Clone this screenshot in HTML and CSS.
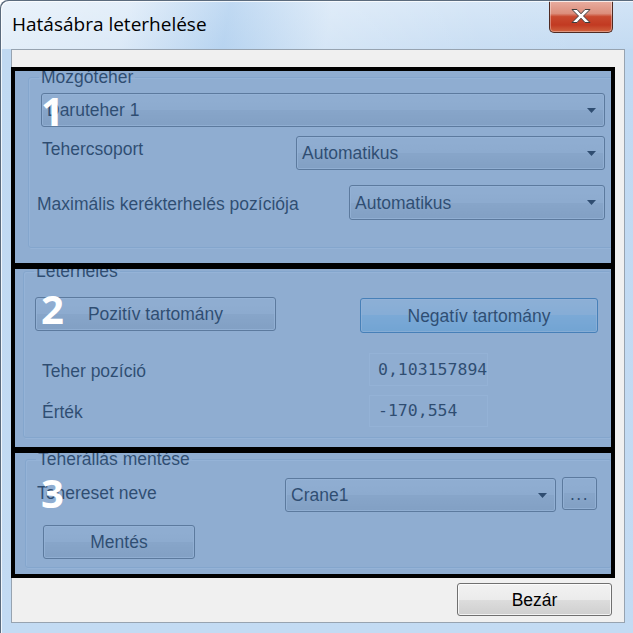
FILE: index.html
```html
<!DOCTYPE html>
<html lang="hu">
<head>
<meta charset="utf-8">
<title>Hatásábra leterhelése</title>
<link rel="stylesheet" href="styles.css">
</head>
<body>
<div class="window">
  <div class="titlebar">
    <div class="title">Hatásábra leterhelése</div>
    <div class="close">
      <svg width="22" height="16" viewBox="0 0 22 16"><path d="M2 1.5h5l4 4.3 4-4.3h5l-6.5 6.5 6.5 6.5h-5l-4-4.3-4 4.3h-5l6.5-6.5z" fill="#fff" stroke="#3d3d3d" stroke-width="1" stroke-linejoin="round"/></svg>
    </div>
  </div>
  <div class="client">
    <section class="zone zone1">
      <fieldset class="group g1">
        <legend>Mozgóteher</legend>
        <div class="combo c-main"><span>Daruteher 1</span><svg class="arr" width="9" height="5" viewBox="0 0 9 5"><path d="M0 0h9L4.5 5z"/></svg></div>
        <div class="row r-csoport">
          <span class="lbl">Tehercsoport</span>
          <div class="combo c-csoport"><span>Automatikus</span><svg class="arr" width="9" height="5" viewBox="0 0 9 5"><path d="M0 0h9L4.5 5z"/></svg></div>
        </div>
        <div class="row r-max">
          <span class="lbl">Maximális kerékterhelés pozíciója</span>
          <div class="combo c-max"><span>Automatikus</span><svg class="arr" width="9" height="5" viewBox="0 0 9 5"><path d="M0 0h9L4.5 5z"/></svg></div>
        </div>
      </fieldset>
      <div class="mark"><span class="num">1</span></div>
    </section>

    <section class="zone zone2">
      <fieldset class="group g2">
        <legend>Leterhelés</legend>
        <div class="row r-btns">
          <div class="btn btn-pos">Pozitív tartomány</div>
          <div class="btn btn-neg">Negatív tartomány</div>
        </div>
        <div class="row r-pos">
          <span class="lbl lbl-col">Teher pozíció</span>
          <div class="field f-pos">0,103157894</div>
        </div>
        <div class="row r-ertek">
          <span class="lbl lbl-col">Érték</span>
          <div class="field f-ertek">-170,554</div>
        </div>
      </fieldset>
      <div class="mark"><span class="num">2</span></div>
    </section>

    <section class="zone zone3">
      <fieldset class="group g3">
        <legend>Teherállás mentése</legend>
        <div class="row r-name">
          <span class="lbl">Tehereset neve</span>
          <div class="combo c-name"><span>Crane1</span><svg class="arr" width="9" height="5" viewBox="0 0 9 5"><path d="M0 0h9L4.5 5z"/></svg></div>
          <div class="btn btn-dots">...</div>
        </div>
        <div class="btn btn-save">Mentés</div>
      </fieldset>
      <div class="mark"><span class="num">3</span></div>
    </section>

    <div class="footer">
      <div class="btn btn-close">Bezár</div>
    </div>
  </div>
</div>
</body>
</html>
```

FILE: styles.css
```css
* { box-sizing: border-box; }

html, body {
  margin: 0;
  background: #ffffff;
}

body {
  width: 633px;
  height: 633px;
  overflow: hidden;
  font-family: "Liberation Sans", Arial, sans-serif;
  font-size: 17.5px;
  color: #000;
}

.window {
  position: relative;
  width: 633px;
  height: 633px;
  display: flex;
  flex-direction: column;
  border-top-left-radius: 8px;
  background: linear-gradient(180deg, #d2e4f6 0px, #c4dbf2 48px, #c0d9f2 50px, #c3dbf3 100%);
}

.window::after {
  content: "";
  position: absolute;
  inset: 0;
  border-top-left-radius: 8px;
  box-shadow: inset 1px 1px 0 #5b6b7d, inset 2px 2px 0 rgba(255, 255, 255, 0.75);
  pointer-events: none;
}

.titlebar {
  height: 49px;
  flex: none;
  display: flex;
  justify-content: space-between;
  align-items: flex-start;
  border-top-left-radius: 8px;
  background: linear-gradient(100deg,
    rgba(255, 255, 255, 0.55) 0%,
    rgba(255, 255, 255, 0.40) 20%,
    rgba(160, 198, 236, 0.35) 36%,
    rgba(255, 255, 255, 0.30) 52%,
    rgba(255, 255, 255, 0.10) 75%,
    rgba(255, 255, 255, 0.00) 100%);
}

.title {
  padding: 13px 0 0 12px;
  font-family: "Open Sans", "Liberation Sans", sans-serif;
  font-size: 19px;
  line-height: 22px;
  color: #000;
}

.close {
  width: 64px;
  height: 33px;
  margin-right: 20px;
  display: flex;
  align-items: center;
  justify-content: center;
  border: 1px solid #4f2a22;
  border-top: none;
  border-radius: 0 0 5px 5px;
  background: linear-gradient(180deg, #e9b0a3 0%, #dc8e7c 42%, #c9492f 52%, #c23a22 78%, #d0633f 100%);
  box-shadow: inset 0 0 0 1px rgba(255, 255, 255, 0.35);
}

.client {
  flex: none;
  margin: 0 8px 0 11px;
  height: 574px;
  border: 1px solid #97a3b0;
  background: #f0f0f0;
  display: flex;
  flex-direction: column;
}

.zone {
  position: relative;
  flex: none;
  width: 604px;
  margin-left: -1px;
}
.zone1 { margin-top: 17px; height: 200px; }
.zone2 { margin-top: -2px; height: 186px; }
.zone3 { margin-top: -2px; height: 129px; }

.group {
  min-width: 0;
  border: 1px solid #d5dfe5;
  border-radius: 3px;
  box-shadow: inset 1px 1px 0 #ffffff, 1px 1px 0 #ffffff;
}

.group legend {
  padding: 0 2px;
  margin-left: -2px;
  line-height: 19px;
}

.g1 { margin: 1px 2px 0 17px; padding: 0 7px 27px 12px; }
.g2 { margin: -3px 3px 0 12px; padding: 0 7px 10px 12px; }
.g3 { margin: 1px 3px 0 14px; padding: 0 14px 8px 12px; }

.row {
  display: flex;
  align-items: flex-start;
}

.lbl {
  line-height: 20px;
  white-space: nowrap;
}

.combo {
  height: 34px;
  display: flex;
  align-items: center;
  justify-content: space-between;
  padding: 0 8px 0 5px;
  border: 1px solid #707070;
  border-radius: 3px;
  background: linear-gradient(180deg, #f2f2f2 0%, #ebebeb 50%, #dddddd 50%, #cfcfcf 100%);
  box-shadow: inset 0 0 0 1px rgba(255, 255, 255, 0.75);
  line-height: 20px;
  white-space: nowrap;
}

.arr { flex: none; fill: #000; }

.c-main { margin-top: 6px; }

.r-csoport { margin-top: 9px; }
.r-csoport .lbl { margin: 3px 0 0 1px; }
.c-csoport { width: 309px; margin-left: auto; }

.r-max { margin-top: 15px; }
.r-max .lbl { margin: 9px 0 0 -4px; }
.c-max { width: 256px; height: 35px; margin-left: auto; }

.btn {
  display: flex;
  align-items: center;
  justify-content: center;
  border: 1px solid #707070;
  border-radius: 3px;
  background: linear-gradient(180deg, #f2f2f2 0%, #ebebeb 50%, #dddddd 50%, #cfcfcf 100%);
  box-shadow: inset 0 0 0 1px rgba(255, 255, 255, 0.75);
  line-height: 20px;
  white-space: nowrap;
}

.r-btns { margin-top: 16px; }
.btn-pos { width: 241px; height: 34px; margin-left: -1px; }
.btn-neg {
  width: 238px;
  height: 35px;
  margin: 1px 0 0 84px;
  border-color: #3c7fb1;
  background: linear-gradient(180deg, #eaf6fd 0%, #d9f0fc 50%, #bee6fd 50%, #a7d9f5 100%);
  box-shadow: inset 0 0 0 1px rgba(255, 255, 255, 0.6);
}

.lbl-col { width: 327px; margin-left: 6px; }
.r-pos { margin-top: 20px; }
.r-pos .lbl { margin-top: 8px; }
.r-ertek { margin-top: 9px; }
.r-ertek .lbl { margin-top: 7px; }

.field {
  width: 119px;
  height: 33px;
  display: flex;
  align-items: center;
  padding-left: 8px;
  border: 1px solid #fcfcfc;
  background: #f0f0f0;
  font-family: "DejaVu Sans Mono", "Liberation Mono", monospace;
  font-size: 16.5px;
  line-height: 20px;
}
.f-ertek { height: 32px; }

.r-name { margin-top: 8px; }
.r-name .lbl { margin: 6px 0 0 -1px; }
.c-name { width: 271px; margin: 1px 0 0 auto; }
.btn-dots { width: 35px; height: 33px; margin-left: 6px; letter-spacing: 1.5px; }
.btn-save { width: 152px; height: 34px; margin: 13px 0 0 5px; }

.footer {
  display: flex;
  justify-content: flex-end;
  margin-top: 5px;
  padding-right: 12px;
}
.btn-close { width: 155px; height: 33px; }

.mark {
  position: absolute;
  inset: 0;
  border: 4px solid #000;
  background: rgba(79, 129, 189, 0.6);
}

.num {
  position: absolute;
  left: 26px;
  top: 20px;
  font-family: "Open Sans", "Liberation Sans", sans-serif;
  font-weight: 700;
  font-size: 40px;
  line-height: 40px;
  color: #fff;
}
```
